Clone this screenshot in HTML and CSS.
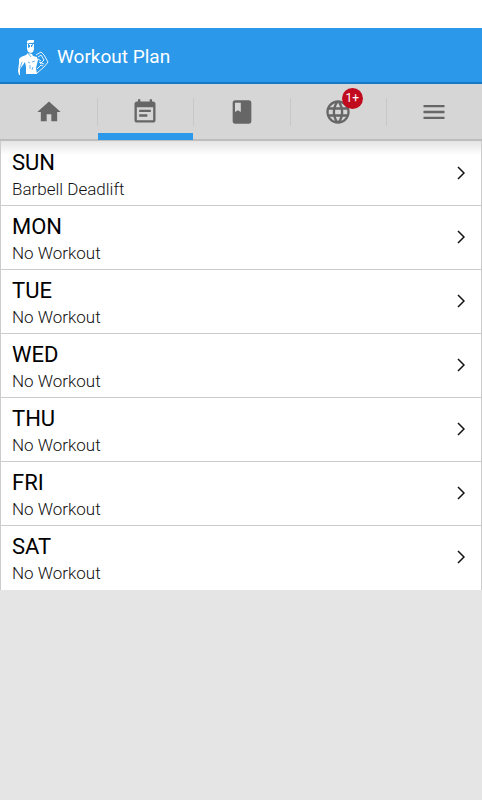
FILE: index.html
```html
<!DOCTYPE html>
<html lang="en">
<head>
  <meta charset="UTF-8">
  <meta name="viewport" content="width=device-width, initial-scale=1.0">
  <title>Workout Plan</title>
  <link rel="stylesheet" href="styles.css">
</head>
<body>
  <header class="topbar">
    <svg class="logo" viewBox="0 0 32 36" aria-hidden="true">
      <path fill="#fff" d="M10 2l2-1 2 0 3 0v2l-1 1-4 0-1 1-1-1zM10 5h1v4l2-1 2 0 1-3h1v5l-1 3-2 1-3-1-1-3zM12 5h3v1h-1v2h-1v-2h-1z"/>
      <path fill="#fff" d="M11 14l4 1 1 2 4 1 1 3-1 4-1 4 1 6H9l0-7-1-5-2 3-3 4 0 6-1 0-1-4 1-8 0-4 2-2 5-2z"/>
      <path fill="none" stroke="#fff" stroke-width=".9" d="M19 16l5-3 3 3 4 7-4 5-7 6M21 18l3-2 3 5-4 4M22 23l5 2M20 30l4-4 2 1M21 20l3 2"/>
      <path fill="none" stroke="#2b98ea" stroke-width=".7" d="M11 14l3 4M3 29l2-6M11 23l2 1M15 23l3-1M13 26v4M16 28l-1 3"/>
    </svg>
    <h1>Workout Plan</h1>
  </header>

  <nav class="tabs">
    <a href="#home" class="tab" aria-label="Home">
      <svg class="icon" viewBox="0 0 24 24"><path d="M10 20v-6h4v6h5v-8h3L12 3 2 12h3v8z"/></svg>
    </a>
    <a href="#plan" class="tab active" aria-label="Workout plan">
      <svg class="icon" viewBox="0 0 24 24"><path d="M17 10H7v2h10v-2zm2-7h-1V1h-2v2H8V1H6v2H5c-1.110 0-1.990.9-1.990 2L3 19c0 1.100.890 2 2 2h14c1.100 0 2-.9 2-2V5c0-1.100-.9-2-2-2zm0 16H5V8h14v11zm-5-5H7v2h7v-2z"/></svg>
    </a>
    <a href="#log" class="tab" aria-label="Log book">
      <svg class="icon" viewBox="0 0 24 24"><path d="M18 2H6c-1.100 0-2 .9-2 2v16c0 1.100.9 2 2 2h12c1.100 0 2-.9 2-2V4c0-1.100-.9-2-2-2zM6 4h5v8l-2.500-1.500L6 12V4z"/></svg>
    </a>
    <a href="#community" class="tab" aria-label="Community">
      <span class="icon-wrap">
        <svg class="icon" viewBox="0 0 24 24"><path d="M11.990 2C6.470 2 2 6.480 2 12s4.470 10 9.990 10C17.520 22 22 17.520 22 12S17.520 2 11.990 2zm6.930 6h-2.950c-.320-1.250-.780-2.450-1.380-3.560 1.840.630 3.370 1.910 4.330 3.560zM12 4.040c.830 1.200 1.480 2.530 1.910 3.960h-3.820c.430-1.430 1.080-2.760 1.910-3.960zM4.260 14C4.100 13.360 4 12.690 4 12s.1-1.360.260-2h3.380c-.08.660-.140 1.320-.140 2s.06 1.340.140 2H4.260zm.820 2h2.950c.320 1.250.780 2.450 1.380 3.560-1.840-.630-3.370-1.900-4.330-3.560zm2.950-8H5.080c.960-1.660 2.490-2.930 4.330-3.560C8.810 5.550 8.350 6.750 8.030 8zM12 19.960c-.830-1.200-1.480-2.530-1.910-3.960h3.820c-.430 1.430-1.080 2.760-1.910 3.960zM14.340 14H9.660c-.09-.660-.160-1.320-.160-2s.07-1.350.160-2h4.680c.09.650.160 1.320.160 2s-.07 1.340-.160 2zm.250 5.560c.6-1.110 1.060-2.310 1.380-3.560h2.950c-.960 1.650-2.490 2.930-4.330 3.560zM16.360 14c.08-.660.140-1.320.140-2s-.06-1.340-.140-2h3.380c.160.640.260 1.310.260 2s-.1 1.360-.260 2h-3.380z"/></svg>
        <span class="badge">1+</span>
      </span>
    </a>
    <a href="#menu" class="tab" aria-label="Menu">
      <svg class="icon" viewBox="0 0 24 24"><path d="M3 18h18v-2H3v2zm0-5h18v-2H3v2zm0-7v2h18V6H3z"/></svg>
    </a>
  </nav>

  <main>
    <ul class="days">
      <li>
        <a href="#sun" class="day">
          <div><h2>SUN</h2><p>Barbell Deadlift</p></div>
          <svg class="arrow" viewBox="0 0 8 14"><path d="M1 1l6 6-6 6"/></svg>
        </a>
      </li>
      <li>
        <a href="#mon" class="day">
          <div><h2>MON</h2><p>No Workout</p></div>
          <svg class="arrow" viewBox="0 0 8 14"><path d="M1 1l6 6-6 6"/></svg>
        </a>
      </li>
      <li>
        <a href="#tue" class="day">
          <div><h2>TUE</h2><p>No Workout</p></div>
          <svg class="arrow" viewBox="0 0 8 14"><path d="M1 1l6 6-6 6"/></svg>
        </a>
      </li>
      <li>
        <a href="#wed" class="day">
          <div><h2>WED</h2><p>No Workout</p></div>
          <svg class="arrow" viewBox="0 0 8 14"><path d="M1 1l6 6-6 6"/></svg>
        </a>
      </li>
      <li>
        <a href="#thu" class="day">
          <div><h2>THU</h2><p>No Workout</p></div>
          <svg class="arrow" viewBox="0 0 8 14"><path d="M1 1l6 6-6 6"/></svg>
        </a>
      </li>
      <li>
        <a href="#fri" class="day">
          <div><h2>FRI</h2><p>No Workout</p></div>
          <svg class="arrow" viewBox="0 0 8 14"><path d="M1 1l6 6-6 6"/></svg>
        </a>
      </li>
      <li>
        <a href="#sat" class="day">
          <div><h2>SAT</h2><p>No Workout</p></div>
          <svg class="arrow" viewBox="0 0 8 14"><path d="M1 1l6 6-6 6"/></svg>
        </a>
      </li>
    </ul>
  </main>
</body>
</html>
```

FILE: styles.css
```css
* {
  box-sizing: border-box;
}

body {
  margin: 0;
  padding-top: 28px;
  min-height: 100vh;
  display: flex;
  flex-direction: column;
  background: #fff;
  font-family: Roboto, "Liberation Sans", sans-serif;
}

h1, h2, p, ul {
  margin: 0;
  padding: 0;
  font-weight: 400;
}

a {
  color: inherit;
  text-decoration: none;
}

.topbar {
  display: flex;
  align-items: center;
  gap: 8px;
  height: 56px;
  padding: 3px 17px 0;
  background: #2b98ea;
  border-bottom: 2px solid #1679c5;
}

.topbar h1 {
  color: #fff;
  font-size: 19px;
  line-height: 24px;
}

.logo {
  width: 32px;
  height: 36px;
}

/* tab bar */
.tabs {
  display: flex;
  height: 57px;
  padding-left: 1px;
  background: #d6d6d6;
  border-bottom: 2px solid #bdbdbd;
}

.tab {
  position: relative;
  flex: 1;
  display: flex;
  align-items: center;
  justify-content: center;
  padding-top: 1px;
}

.tab + .tab::before {
  content: "";
  position: absolute;
  left: 0;
  top: 14px;
  width: 1px;
  height: 28px;
  background: #c8c8c8;
}

.tab.active::after {
  content: "";
  position: absolute;
  left: 1px;
  right: 0;
  bottom: -1px;
  height: 7px;
  background: #2b98ea;
}

.icon {
  display: block;
  width: 28px;
  height: 28px;
  fill: #666;
}

.icon-wrap {
  position: relative;
}

.badge {
  position: absolute;
  top: -10px;
  right: -11px;
  width: 21px;
  height: 21px;
  border-radius: 50%;
  background: #c10a1e;
  color: #fff;
  font-size: 12px;
  line-height: 21px;
  text-align: center;
}

/* week list */
main {
  flex: 1;
  background: #e5e5e5;
}

.days {
  list-style: none;
  padding-top: 1px;
  background: linear-gradient(#e4e4e4, #fff 14px);
  border: solid #ccc;
  border-width: 0 1px;
}

.day {
  display: flex;
  align-items: center;
  justify-content: space-between;
  height: 64px;
  padding: 0 16px 2px 11px;
  border-bottom: 1px solid #ccc;
}

li:last-child .day {
  border-bottom-color: #fff;
}

.day h2 {
  padding-top: 4px;
  color: #000;
  font-size: 22px;
  line-height: 28px;
}

.day p {
  color: #111;
  font-size: 17px;
  font-weight: 300;
  line-height: 24px;
}

.arrow {
  width: 8px;
  height: 14px;
  fill: none;
  stroke: #111;
  stroke-width: 1.5;
}
```
